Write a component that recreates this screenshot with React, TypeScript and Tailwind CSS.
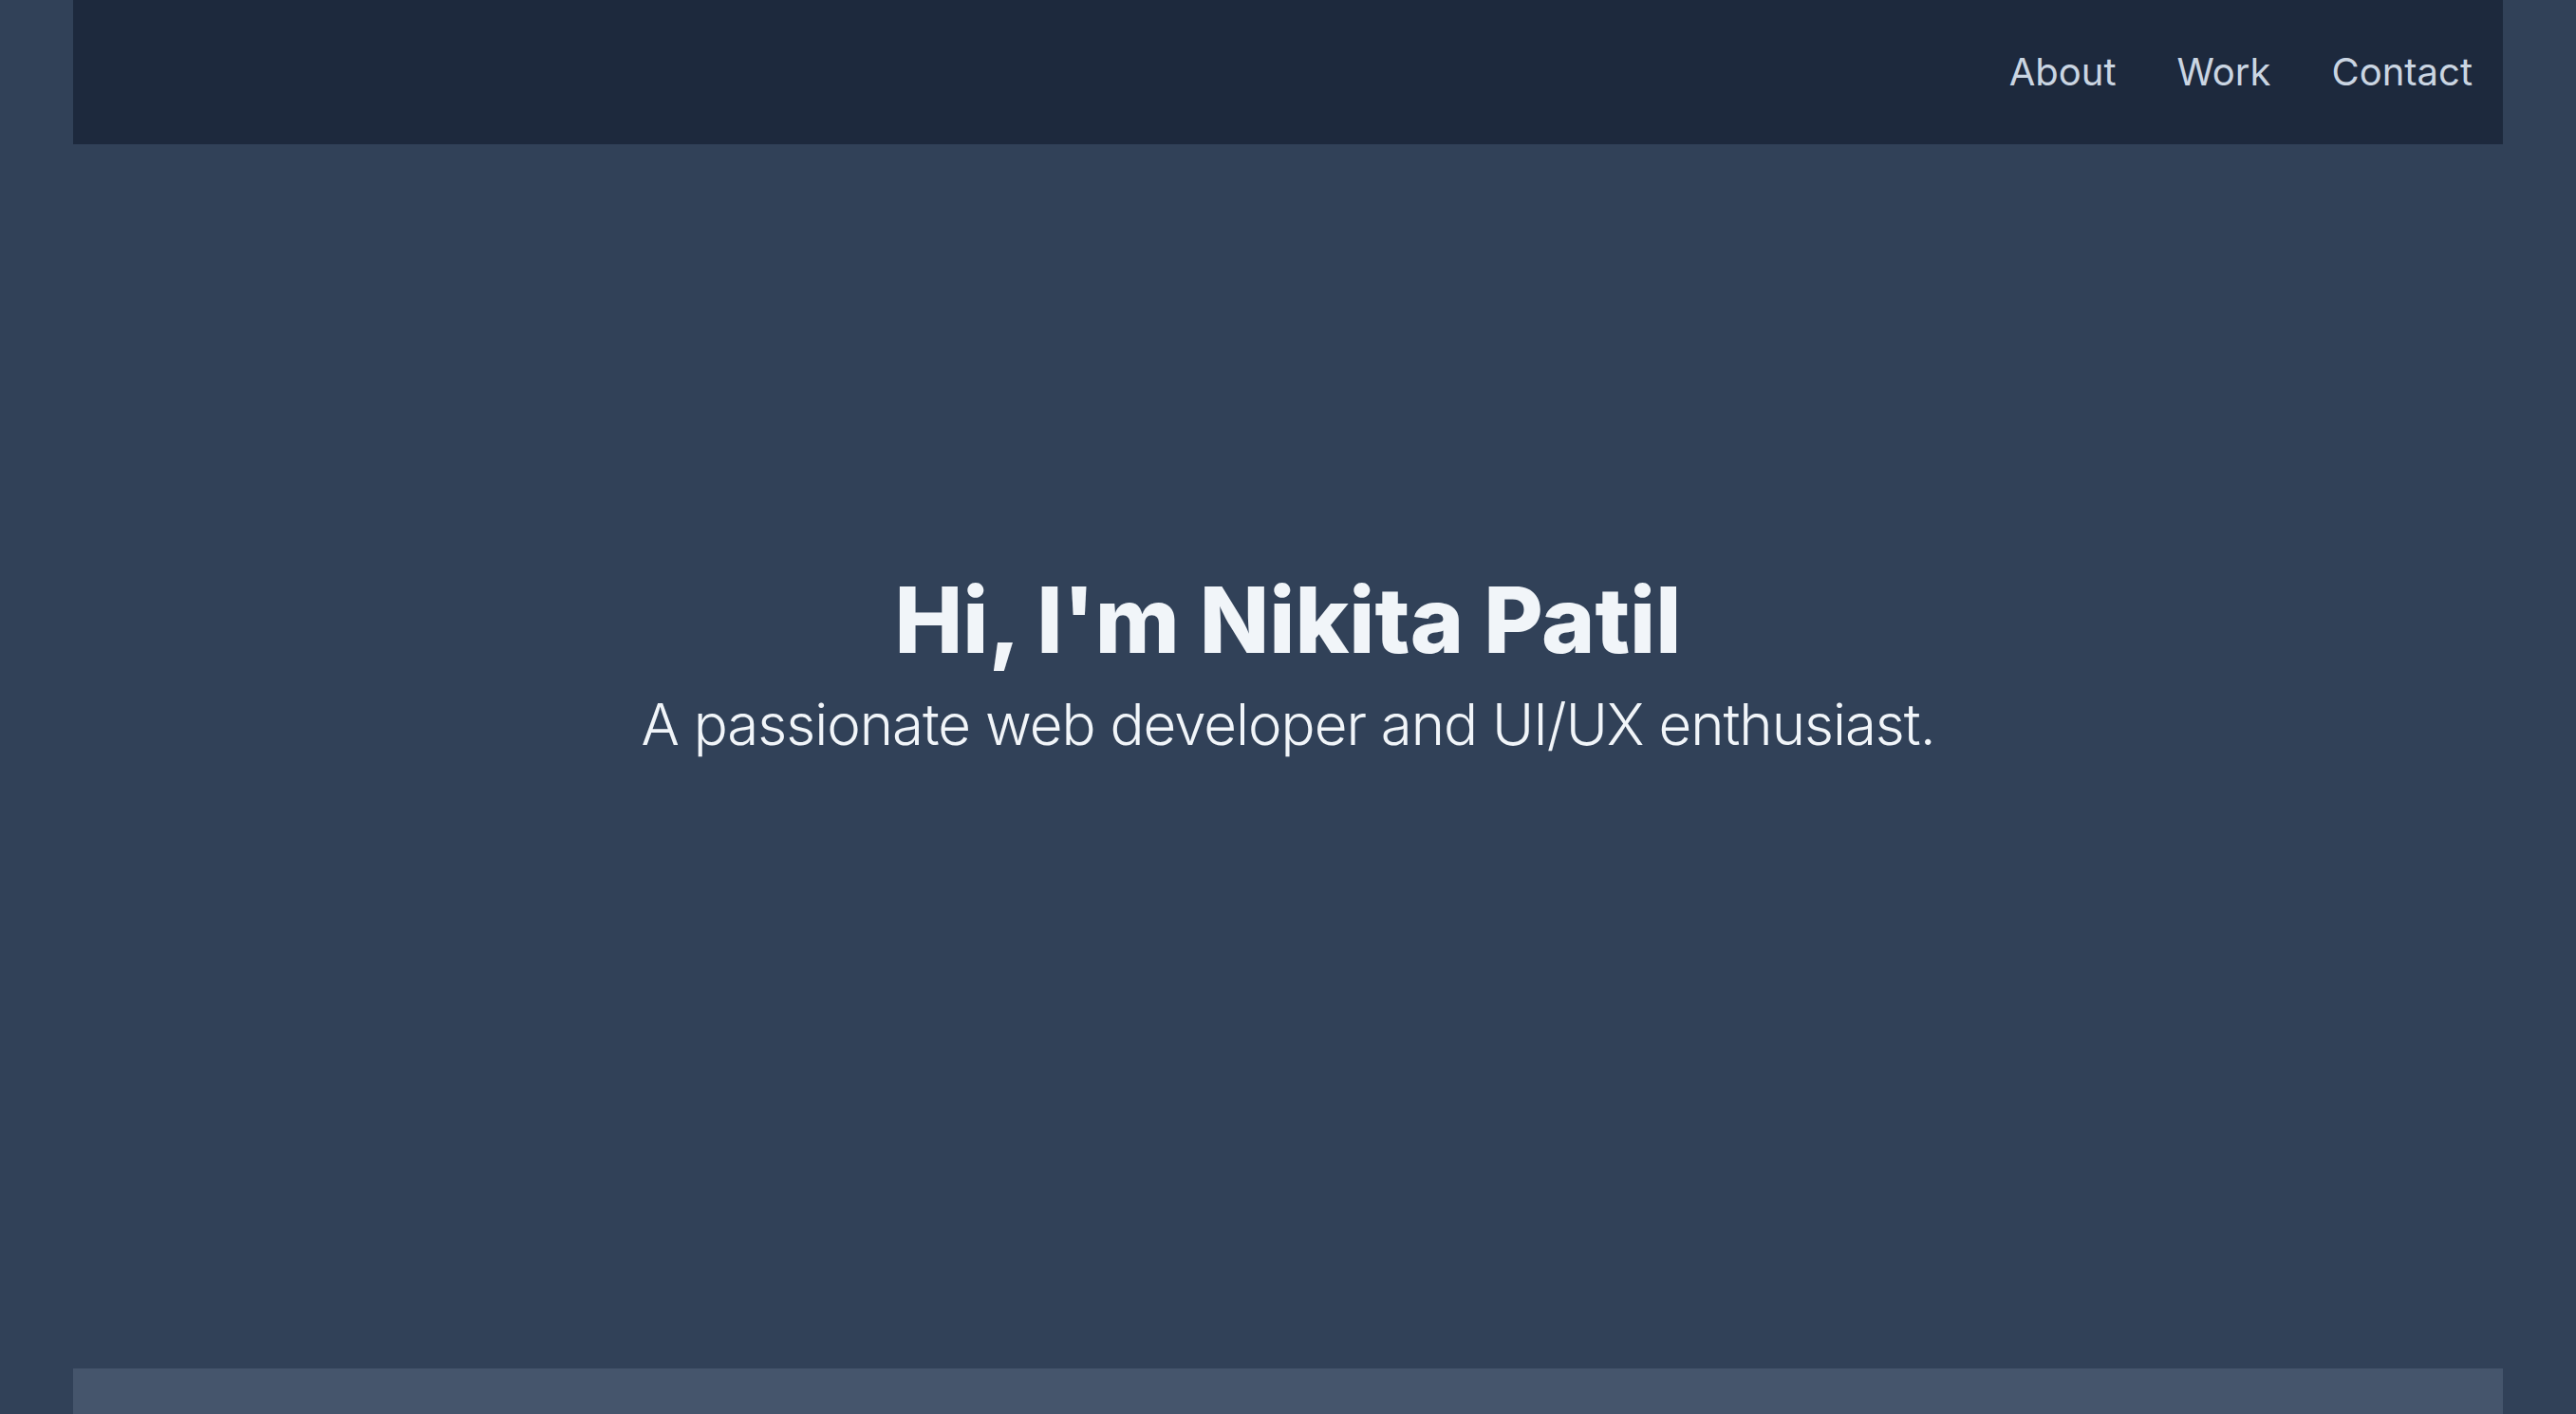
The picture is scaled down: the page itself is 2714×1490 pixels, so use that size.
export default function App() {
  return (
    <div
      className="min-h-screen bg-slate-700 text-slate-100"
      style={{ fontFamily: "Inter, 'Noto Sans', sans-serif" }}
    >
      {/* Header */}
      <header className="mx-auto flex h-[152px] max-w-[2560px] items-center justify-end bg-slate-800 pr-8">
        <nav className="flex gap-16 text-[40px] text-slate-300">
          <a href="#about">About</a>
          <a href="#work">Work</a>
          <a href="#contact">Contact</a>
        </nav>
      </header>

      {/* Hero */}
      <main className="flex h-[1290px] flex-col items-center pt-[453px] text-center">
        <h1 className="text-8xl leading-none font-extrabold">Hi, I'm Nikita Patil</h1>
        <p className="mt-8 text-6xl leading-none font-light tracking-[-0.017em]">
          A passionate web developer and UI/UX enthusiast.
        </p>
      </main>

      {/* Footer */}
      <footer className="mx-auto max-w-[2560px] bg-slate-600 px-8 pt-[46px] pb-12 text-center text-2xl text-slate-100">
        © 2024 Nikita Patil. All rights reserved.
      </footer>
    </div>
  );
}
